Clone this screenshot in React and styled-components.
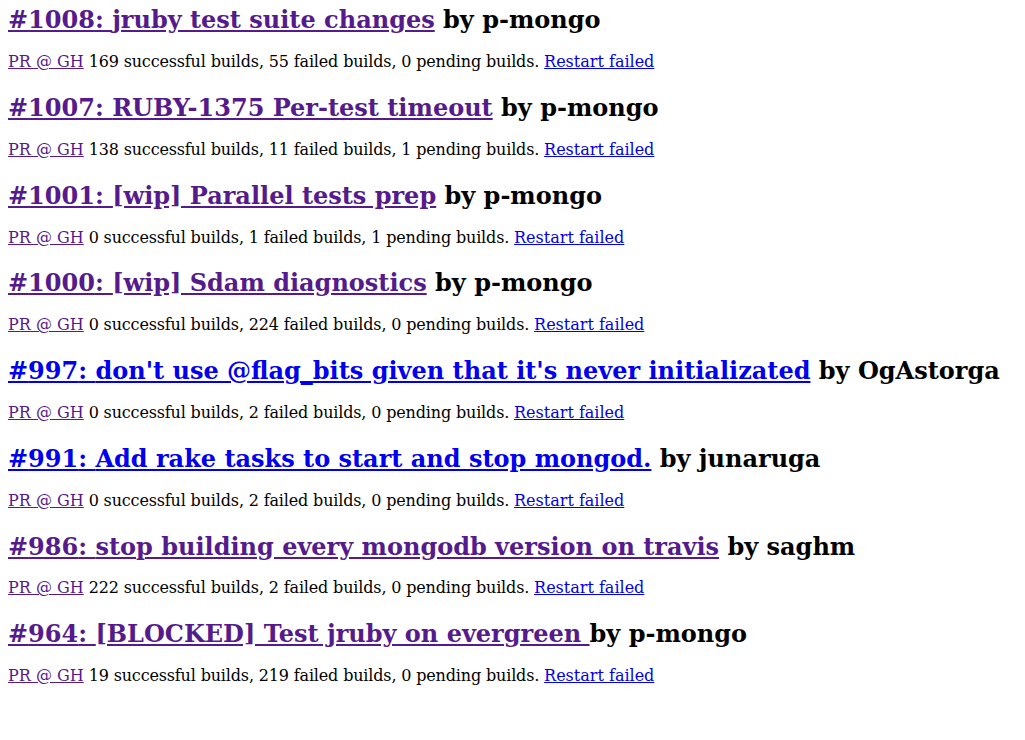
import React from "react";
import styled, { createGlobalStyle } from "styled-components";

const GlobalStyle = createGlobalStyle`
  html, body { background: #fff; }
  body {
    margin: 0;
    font-family: "DejaVu Serif", serif;
    font-size: 16px;
    color: #000;
  }
`;

const List = styled.div`
  padding: 6.4px 8px 0;
`;

const Entry = styled.section`
  display: block;
`;

const Title = styled.h2`
  font-size: 24px;
  line-height: 28px;
  font-weight: bold;
  margin: 0 0 17.8px;
`;

const Summary = styled.p`
  font-size: 16px;
  line-height: 19px;
  margin: 0 0 22.9px;
`;

const Counts = styled.span`
  letter-spacing: -0.16px;
`;

const Link = styled.a`
  color: ${(p) => (p.$visited ? "#551a8b" : "#0000ee")};
  text-decoration: underline;
  cursor: pointer;
`;

const pulls = [
  { n: 1008, title: "jruby test suite changes", author: "p-mongo", ok: 169, failed: 55, pending: 0, visited: true },
  { n: 1007, title: "RUBY-1375 Per-test timeout", author: "p-mongo", ok: 138, failed: 11, pending: 1, visited: true },
  { n: 1001, title: "[wip] Parallel tests prep", author: "p-mongo", ok: 0, failed: 1, pending: 1, visited: true },
  { n: 1000, title: "[wip] Sdam diagnostics", author: "p-mongo", ok: 0, failed: 224, pending: 0, visited: true },
  { n: 997, title: "don't use @flag_bits given that it's never initializated", author: "OgAstorga", ok: 0, failed: 2, pending: 0, visited: false },
  { n: 991, title: "Add rake tasks to start and stop mongod.", author: "junaruga", ok: 0, failed: 2, pending: 0, visited: false },
  { n: 986, title: "stop building every mongodb version on travis", author: "saghm", ok: 222, failed: 2, pending: 0, visited: true },
  { n: 964, title: "[BLOCKED] Test jruby on evergreen ", author: "p-mongo", ok: 19, failed: 219, pending: 0, visited: true },
];

export default function App() {
  return (
    <>
      <GlobalStyle />
      <List>
        {pulls.map((p) => (
          <Entry key={p.n}>
            <Title>
              <Link $visited={p.visited}>#{p.n}: {p.title}</Link> by {p.author}
            </Title>
            <Summary>
              <Link $visited>PR @ GH</Link>
              <Counts>
                {" "}{p.ok} successful builds, {p.failed} failed builds, {p.pending} pending builds.{" "}
              </Counts>
              <Link>Restart failed</Link>
            </Summary>
          </Entry>
        ))}
      </List>
    </>
  );
}
